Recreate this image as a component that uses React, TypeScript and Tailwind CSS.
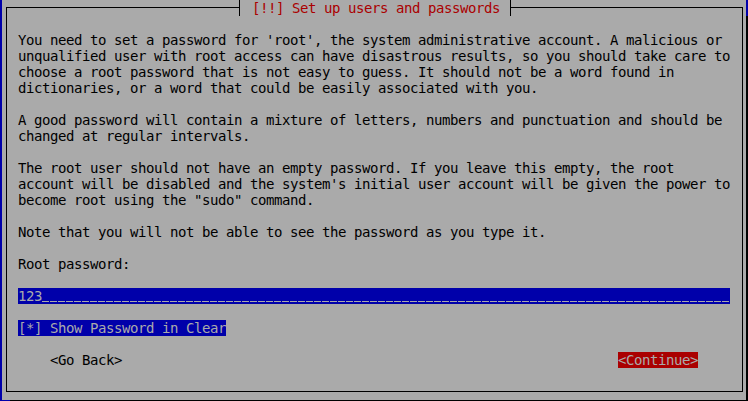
import React from "react";

const p1 = [
  "You need to set a password for 'root', the system administrative account. A malicious or",
  "unqualified user with root access can have disastrous results, so you should take care to",
  "choose a root password that is not easy to guess. It should not be a word found in",
  "dictionaries, or a word that could be easily associated with you.",
];
const p2 = [
  "A good password will contain a mixture of letters, numbers and punctuation and should be",
  "changed at regular intervals.",
];
const p3 = [
  "The root user should not have an empty password. If you leave this empty, the root",
  "account will be disabled and the system's initial user account will be given the power to",
  'become root using the "sudo" command.',
];

function Lines({ lines }: { lines: string[] }) {
  return (
    <div>
      {lines.map((l, i) => (
        <div key={i} className="h-[16px] whitespace-pre">
          {l}
        </div>
      ))}
    </div>
  );
}

function Blank() {
  return <div className="h-[16px]" />;
}

export default function App() {
  const unders = Array.from({ length: 86 });
  return (
    <div
      className="w-[748px] h-[401px] bg-[#0000aa] flex flex-col overflow-hidden text-[14px] leading-[16px] tracking-[-0.43px] text-black"
      style={{ fontFamily: '"DejaVu Sans Mono", "Liberation Mono", monospace' }}
    >
      <div className="flex h-[400px]">
        <div className="w-[2px] shrink-0" />
        <div className="w-[744px] h-[400px] shrink-0 bg-[#aaaaaa] pt-[7px] pl-[4px]">
          <div className="relative w-[737px] h-[385px] border border-black">
            <div className="absolute left-[232px] top-[-8px] w-[272px] h-[16px] bg-[#aaaaaa] border-x border-black pl-[12px] text-[#aa0000] whitespace-pre">
              [!!] Set up users and passwords
            </div>
            <div className="pl-[11px] pt-[24px]">
              <Lines lines={p1} />
              <Blank />
              <Lines lines={p2} />
              <Blank />
              <Lines lines={p3} />
              <Blank />
              <Lines lines={["Note that you will not be able to see the password as you type it."]} />
              <Blank />
              <Lines lines={["Root password:"]} />
              <Blank />
              <div className="flex w-[712px] h-[16px] bg-[#0000aa] text-[#aaaaaa] overflow-hidden">
                <div className="w-[24px] shrink-0 whitespace-pre">123</div>
                {unders.map((_, i) => (
                  <div key={i} className="w-[8px] h-[16px] shrink-0">
                    <div className="w-[7px] h-[14px] border-b border-[#aaaaaa]" />
                  </div>
                ))}
              </div>
              <Blank />
              <div className="flex">
                <div className="h-[16px] bg-[#0000aa] text-[#aaaaaa] whitespace-pre">
                  [*] Show Password in Clear
                </div>
              </div>
              <Blank />
              <div className="flex justify-between pl-[32px] pr-[44px] h-[16px]">
                <div className="whitespace-pre">&lt;Go Back&gt;</div>
                <div className="whitespace-pre bg-[#aa0000] text-[#aaaaaa]">&lt;Continue&gt;</div>
              </div>
            </div>
          </div>
        </div>
        <div className="w-[2px] shrink-0 flex flex-col">
          <div className="h-[16px] shrink-0" />
          <div className="flex-1 bg-black" />
        </div>
      </div>
      <div className="flex h-[1px]">
        <div className="w-[10px] shrink-0" />
        <div className="flex-1 bg-black" />
      </div>
    </div>
  );
}
